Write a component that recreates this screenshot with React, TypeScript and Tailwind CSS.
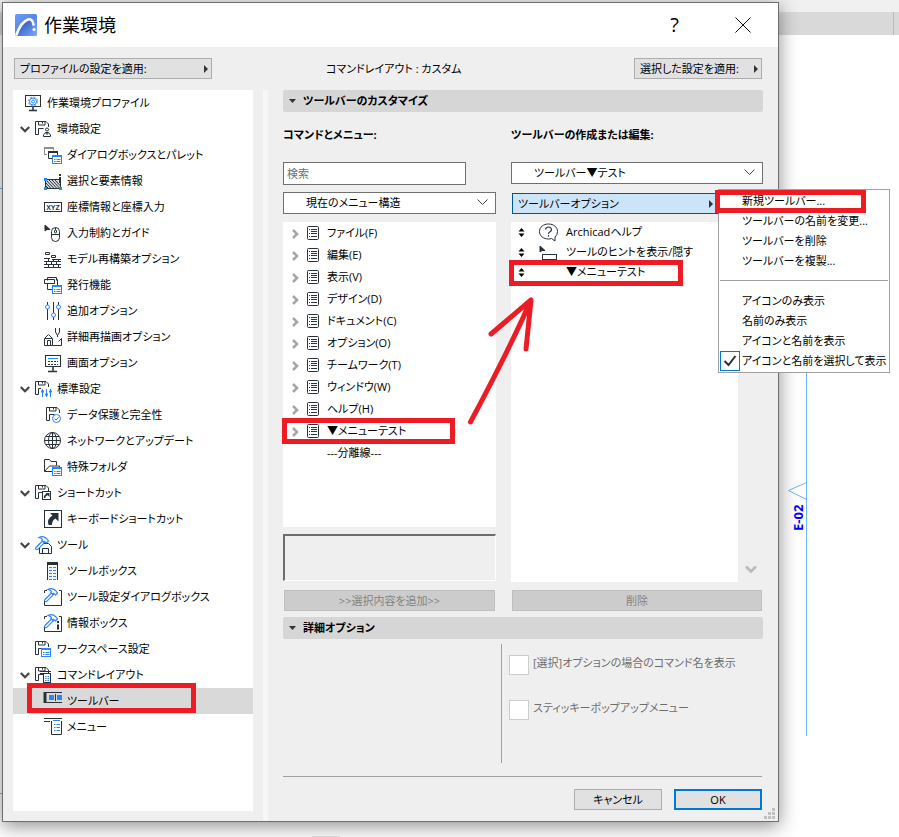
import { useState } from 'react'
import type { ReactNode } from 'react'
import { clsx } from 'clsx'

const DARK = '#263238'
const BLUE = '#2a83ff'

/* ---------- アイコン部品 ---------- */

const Floppy = () => (
  <g stroke={DARK}>
    <path d="M3.5 14.5h-3v-13h10.500l2.500 2.500v3" />
    <path d="M3.500 2v3h6.500V2M7.500 2v1.500M3.500 14.500V8.500h5" />
  </g>
)

const MiniWindow = () => (
  <g stroke={BLUE}>
    <rect x="8.500" y="9.500" width="9" height="8" fill="#fff" />
    <path d="M8 10h10" strokeWidth="2" />
    <path d="M10 13.500h1.500M12.500 13.500h4M10 15.500h1.500M12.500 15.500h4" />
  </g>
)

const Hammer = () => (
  <g stroke={BLUE} strokeWidth="1.200" fill="#fff">
    <path d="M1 11.500 7.500 5l1.800 1.800L2.800 13.300Q1 14 .5 12.500Z" />
    <path d="M4 1.500Q8-.5 11.500 2.500L13.500 5 11.500 7 9.500 5.200 8.500 6 6.800 4.400 7.500 3.500Q6.500 2 4 1.500Z" />
  </g>
)

const icons: Record<string, ReactNode> = {
  profile: (
    <>
      <rect x=".5" y="1.500" width="15" height="11" stroke={DARK} />
      <path d="M8 13v3M4 16.500h8" stroke={DARK} strokeWidth="1.500" />
      <circle cx="8" cy="7.500" r="1.500" stroke={BLUE} />
      <circle cx="8" cy="7.500" r="3.500" stroke={BLUE} />
      <circle cx="8" cy="7.500" r="4.500" stroke={BLUE} strokeDasharray="1.800 1.734" />
    </>
  ),
  env: (
    <>
      <Floppy />
      <circle cx="12" cy="9.500" r="1.500" stroke={DARK} />
      <path d="M8.500 16.500v-1.500l2-2.500h3l2 2.500v1.500zM10.500 12.500l1.500 2 1.500-2" stroke={DARK} fill="#fff" />
    </>
  ),
  dialog: (
    <>
      <path d="M3 8.500H.5v-7h9v3" stroke="#8b9297" />
      <path d="M0 2h10" stroke="#8b9297" strokeWidth="2" />
      <path d="M8 12.500H4.500v-7h9v3.500" stroke={DARK} />
      <path d="M4 6h10" stroke={DARK} strokeWidth="2" />
      <MiniWindow />
    </>
  ),
  select: (
    <>
      <rect x="1.500" y="7.500" width="15" height="9" fill="#d5d8da" stroke={DARK} />
      <path d="M2 8l8 8.500M5 8l8 8.500M8 8l8 8.500M11 8l5 5.500M2 11l5 5.500M2 14l2.500 2.500" stroke={DARK} />
      <path d="M0 6h3v3H0zM0 15h3v3H0zM15 15h3v3h-3z" fill={BLUE} />
      <path d="M16 2v2M16 5v6" stroke={DARK} strokeWidth="2" />
    </>
  ),
  xyz: (
    <>
      <rect x=".5" y="4.500" width="17" height="9" stroke={DARK} />
      <text x="9" y="11.500" textAnchor="middle" fontSize="7" fontWeight="700" fontFamily="Liberation Sans, sans-serif" fill={DARK}>XYZ</text>
    </>
  ),
  mouse: (
    <>
      <path d="M1 1v6l2-1.500h3z" fill={DARK} stroke={DARK} />
      <rect x="7.500" y="3.500" width="8" height="14" rx="4" stroke={DARK} />
      <path d="M7.500 10.500h8M11.500 4v2" stroke={DARK} />
      <rect x="10.500" y="6" width="2" height="3" rx="1" stroke={DARK} />
    </>
  ),
  bricks: (
    <g stroke={DARK}>
      <path d="M1.500 2.500h4v2h-4zM7.500 5.500h4v2h-4z" />
      <path d="M0 8.500h6M0 11.500h17M0 14.500h17M0 17.500h17M4.500 9v2.500M9.500 9v2.500M14.500 9v2.500M2.500 12v2.500M7.500 12v2.500M12.500 12v2.500M4.500 15v2.500M9.500 15v2.500M14.500 15v2.500" />
      <path d="M8 9.500h9" />
    </g>
  ),
  publish: (
    <>
      <path d="M3.500 4.500v-3h9v3M13.500 9V3.500h-1" stroke={DARK} />
      <path d="M.5 3.500h10v4h-10zM3.500 8v5.500H8" stroke={DARK} />
      <MiniWindow />
    </>
  ),
  sliders: (
    <>
      <path d="M3.500 0v18M9.500 0v18M14.500 0v18" stroke={DARK} />
      <circle cx="3.500" cy="5" r="2" fill="#fff" stroke={BLUE} />
      <circle cx="9.500" cy="13" r="2" fill="#fff" stroke={BLUE} />
      <circle cx="14.500" cy="5" r="2" fill="#fff" stroke={BLUE} />
    </>
  ),
  redraw: (
    <g stroke={DARK}>
      <path d="M.5 17.500V10.500L4.500 6.500l4 4v7zM3.500 17.500v-5h3v5M1 10.500h7" />
      <path d="M11.500 0v4l2 3.500 2-3.500V0M13.500 7v2" />
      <path d="M8.500 17.500h9v-7l-3 3" />
    </g>
  ),
  screen: (
    <>
      <rect x="1.500" y="1.500" width="15" height="11" stroke={DARK} />
      <path d="M9 13v4M4 17.500h9" stroke={DARK} strokeWidth="1.500" />
      <path d="M4 4.500h10" stroke={BLUE} />
      <path d="M4 7.500h10M4 10.500h10" stroke={DARK} strokeDasharray="2 1" />
    </>
  ),
  standard: (
    <>
      <Floppy />
      <path d="M6 8h11v10H6z" fill="#fff" />
      <path d="M7.500 9v8M11.500 9v8M15.500 9v8" stroke={BLUE} />
      <path d="M6 11.500h3M10 14.500h3M14 11.500h3" stroke={BLUE} strokeWidth="2" />
    </>
  ),
  protect: (
    <>
      <g transform="translate(2 0)"><Floppy /></g>
      <circle cx="12.500" cy="12.500" r="4" fill="#fff" stroke={BLUE} />
      <path d="M10.500 12.500l1.500 1.500 3-3" stroke={BLUE} />
    </>
  ),
  globe: (
    <g stroke={DARK}>
      <circle cx="8.500" cy="8.500" r="8" />
      <ellipse cx="8.500" cy="8.500" rx="4" ry="8" />
      <path d="M8.500 0v17M0 8.500h17M2 4.500h13M2 12.500h13" />
    </g>
  ),
  folder: (
    <>
      <path d="M.5 13.500v-12h5l1.500 2h5.500v4M.5 13.500l5-5.500h10v1.500M.5 13.500H8" stroke={DARK} />
      <MiniWindow />
    </>
  ),
  shortcut: (
    <>
      <Floppy />
      <rect x="7.500" y="7.500" width="8" height="8" fill="#fff" stroke={DARK} />
      <path d="M9.500 14q0-3 3-3.500" stroke={DARK} strokeWidth="1.500" />
      <path d="M10.500 9h4v4z" fill={DARK} />
    </>
  ),
  keyboard: (
    <>
      <rect x=".5" y=".5" width="17" height="17" stroke={DARK} />
      <path d="M6 3h8.500v8.500l-3-3Q8 10 8 15H4.500Q2.500 9 8.500 5.500Z" fill={DARK} />
    </>
  ),
  tool: (
    <>
      <path d="M4.500 17.500V7.500h9l3 3v7zM7.500 17.500v-5h6v5" stroke={DARK} />
      <Hammer />
    </>
  ),
  toolbox: (
    <>
      <path d="M3.500 1v17M13.500 1v17M3 1.500h11" stroke={DARK} />
      <path d="M3 1.500h11" stroke={DARK} strokeWidth="3" />
      <path d="M5 5.500h3M9 5.500h3M5 8.500h3M9 8.500h3M5 11.500h3M9 11.500h3M5 14.500h3M9 14.500h3M5 17.500h3M9 17.500h3" stroke={BLUE} />
      <path d="M4 7h9M4 10h9M4 13h9M4 16h9" stroke="#c3c8ca" strokeWidth=".5" />
    </>
  ),
  toolDialog: (
    <>
      <path d="M.5 5V2.500H3M.5 13v4.500h17V2.500H15" stroke={DARK} />
      <Hammer />
    </>
  ),
  info: (
    <>
      <path d="M.5 5V2.500H3M.5 13v4.500h17V2.500H15" stroke={DARK} />
      <Hammer />
      <path d="M14 7v2M14 10.500v5" stroke={DARK} strokeWidth="2" />
    </>
  ),
  workspace: (
    <>
      <Floppy />
      <g transform="translate(-2 -1)"><MiniWindow /></g>
    </>
  ),
  command: (
    <>
      <Floppy />
      <path d="M5 5.500h11M5 7.500h11" stroke={DARK} />
      <rect x="8.500" y="7.500" width="7" height="9" fill="#fff" stroke={DARK} />
      <path d="M10 10.500h1.500M12.500 10.500H14M10 12.500h1.500M12.500 12.500H14M10 14.500h1.500M12.500 14.500H14" stroke={BLUE} />
    </>
  ),
  toolbar: (
    <>
      <path d="M1 0v11" stroke={DARK} strokeWidth="3" />
      <path d="M0 .5h18M0 10.500h18M11.500 2v7" stroke={DARK} />
      <path d="M5 3h5v5H5zM13 3h5v5h-5z" fill={BLUE} />
    </>
  ),
  menu: (
    <>
      <path d="M0 .5h18M0 3.500h6M7.500 3v13.500h10V3" stroke={DARK} />
      <path d="M9 2.500h7" stroke={BLUE} />
      <path d="M10 6.500h1.500M12.500 6.500H16M10 9.500h1.500M12.500 9.500H16M10 12.500h1.500M12.500 12.500H16" stroke={BLUE} />
    </>
  ),
}

const TreeIcon = ({ name }: { name: string }) => (
  <svg className="h-[18px] w-[18px] shrink-0 overflow-visible" viewBox="0 0 18 18" fill="none" aria-hidden="true">
    {icons[name]}
  </svg>
)

/* ---------- データ ---------- */

const tree = [
  { level: 0, icon: 'profile', label: '作業環境プロファイル' },
  { level: 1, icon: 'env', label: '環境設定', open: true },
  { level: 2, icon: 'dialog', label: 'ダイアログボックスとパレット' },
  { level: 2, icon: 'select', label: '選択と要素情報' },
  { level: 2, icon: 'xyz', label: '座標情報と座標入力' },
  { level: 2, icon: 'mouse', label: '入力制約とガイド' },
  { level: 2, icon: 'bricks', label: 'モデル再構築オプション' },
  { level: 2, icon: 'publish', label: '発行機能' },
  { level: 2, icon: 'sliders', label: '追加オプション' },
  { level: 2, icon: 'redraw', label: '詳細再描画オプション' },
  { level: 2, icon: 'screen', label: '画面オプション' },
  { level: 1, icon: 'standard', label: '標準設定', open: true },
  { level: 2, icon: 'protect', label: 'データ保護と完全性' },
  { level: 2, icon: 'globe', label: 'ネットワークとアップデート' },
  { level: 2, icon: 'folder', label: '特殊フォルダ' },
  { level: 1, icon: 'shortcut', label: 'ショートカット', open: true },
  { level: 2, icon: 'keyboard', label: 'キーボードショートカット' },
  { level: 1, icon: 'tool', label: 'ツール', open: true },
  { level: 2, icon: 'toolbox', label: 'ツールボックス' },
  { level: 2, icon: 'toolDialog', label: 'ツール設定ダイアログボックス' },
  { level: 2, icon: 'info', label: '情報ボックス' },
  { level: 1, icon: 'workspace', label: 'ワークスペース設定' },
  { level: 1, icon: 'command', label: 'コマンドレイアウト', open: true },
  { level: 2, icon: 'toolbar', label: 'ツールバー' },
  { level: 2, icon: 'menu', label: 'メニュー' },
]

const commands = [
  'ファイル(F)',
  '編集(E)',
  '表示(V)',
  'デザイン(D)',
  'ドキュメント(C)',
  'オプション(O)',
  'チームワーク(T)',
  'ウィンドウ(W)',
  'ヘルプ(H)',
  '▼メニューテスト',
]

/* ---------- 共通部品 ---------- */

const Marker = ({ className }: { className: string }) => (
  <span className={clsx('pointer-events-none absolute z-10 border-5 border-[#ed1c24]', className)} />
)

const RightArrow = () => (
  <svg className="h-2 w-1 shrink-0" viewBox="0 0 4 8" aria-hidden="true">
    <path d="M0 0l4 4-4 4z" fill="#333" />
  </svg>
)

const SectionHeader = ({ children }: { children: ReactNode }) => (
  <h2 className="h-[22px] rounded-xs bg-[#d6d6d6] font-bold">
    <button className="flex h-full w-full items-center gap-[7px] pl-1.5">
      <svg className="h-1 w-[7px]" viewBox="0 0 7 4" aria-hidden="true">
        <path d="M0 0h7L3.500 4z" fill="#333" />
      </svg>
      {children}
    </button>
  </h2>
)

const Dropdown = ({ id, value, label }: { id: string; value: string; label: string }) => (
  <div className="relative">
    <select id={id} aria-label={label} className="block h-[22px] w-full appearance-none border border-[#707070] bg-white pl-[22px] outline-none">
      <option>{value}</option>
    </select>
    <svg className="pointer-events-none absolute top-[7px] right-2 h-[7px] w-[11px]" viewBox="0 0 11 7" fill="none" stroke="#444" aria-hidden="true">
      <path d="M.5.5l5 5 5-5" />
    </svg>
  </div>
)

const UpDown = () => (
  <svg className="h-[9px] w-[7px] shrink-0" viewBox="0 0 7 9" aria-hidden="true">
    <path d="M.5 3.500 3.500 0l3 3.500zM.5 5.500h6L3.500 9z" fill="#000" />
  </svg>
)

const ToolbarMenu = () => (
  <div role="menu" className="absolute -top-1 left-full z-20 w-[172px] border border-[#a0a0a0] bg-white p-px">
    {['新規ツールバー...', 'ツールバーの名前を変更...', 'ツールバーを削除', 'ツールバーを複製...'].map((item, i) => (
      <button key={item} role="menuitem" className="relative block h-5 w-full pl-[22px] text-left whitespace-nowrap">
        {item}
        {i === 0 && <Marker className="-top-px -left-[5px] h-[23px] w-[151px]" />}
      </button>
    ))}
    <hr className="mt-[9px] mb-2.5 border-[#a0a0a0]" />
    {['アイコンのみ表示', '名前のみ表示', 'アイコンと名前を表示', 'アイコンと名前を選択して表示'].map((item, i) => (
      <button key={item} role="menuitem" className="flex h-5 w-full items-center gap-0.5 text-left whitespace-nowrap">
        <span className={clsx('h-5 w-5 shrink-0 border', i === 3 ? 'border-[#0078d7]' : 'border-transparent')}>
          {i === 3 && (
            <svg viewBox="0 0 18 18" fill="none" stroke={DARK} strokeWidth="2" aria-hidden="true">
              <path d="M3.500 9l4 4 7-9" />
            </svg>
          )}
        </span>
        {item}
      </button>
    ))}
  </div>
)

/* ---------- 背景の図面 ---------- */

const Backdrop = () => (
  <div className="absolute inset-0" aria-hidden="true">
    <div className="h-3 bg-[#f0f0f0]" />
    <div className="flex h-[23px] justify-end bg-[#d9d9d9] pr-[5px]">
      <div className="w-px bg-[#b9b9b9]" />
    </div>
    <svg className="absolute top-0 left-0 h-[837px] w-[899px]" viewBox="0 0 899 837" fill="none">
      <path d="M806.500 373v363M806.500 482.500L788.500 490.500l18 9" stroke="#6cb6ff" />
      <path d="M0 188.500h3M0 793.500h3" stroke="#6cb6ff" />
      <path d="M312 836.500h28" stroke="#e4e4e4" />
      <text x="803" y="531" transform="rotate(-90 803 531)" fontSize="13" fontWeight="700" fill="#0000ff" fontFamily="Open Sans, sans-serif">
        E-02
      </text>
    </svg>
  </div>
)

/* ---------- 画面 ---------- */

const SideTree = () => {
  const [selected, setSelected] = useState('ツールバー')

  return (
    <ul className="w-60 shrink-0 bg-white">
      {tree.map((node) => (
        <li key={node.label} className="relative">
          <button
            onClick={() => setSelected(node.label)}
            className={clsx(
              'flex h-[26px] w-full items-center whitespace-nowrap',
              node.level === 0 && 'gap-1 pl-3',
              node.level === 1 && 'gap-1 pl-[22px]',
              node.level === 2 && 'gap-[5px] pl-[31px]',
              selected === node.label && 'bg-[#d9d9d9]',
            )}
          >
            {node.open && (
              <svg className="absolute left-[7px] h-[7px] w-2.5" viewBox="0 0 10 7" fill="none" stroke="#444" strokeWidth="2.200" aria-hidden="true">
                <path d="M.8 1l4.200 4.200L9.200 1" />
              </svg>
            )}
            <TreeIcon name={node.icon} />
            {node.label}
          </button>
          {node.label === 'ツールバー' && <Marker className="-top-[5px] left-3.5 h-[30px] w-[169px]" />}
        </li>
      ))}
    </ul>
  )
}

const CommandColumn = () => (
  <div>
    <label htmlFor="search" className="mt-[13px] block h-5 font-bold">コマンドとメニュー:</label>
    <input id="search" type="text" placeholder="検索" className="mt-[17px] block h-[23px] w-[183px] border border-[#707070] bg-white px-[3px] outline-none placeholder:text-[#6d6d6d]" />
    <div className="mt-[7px]">
      <Dropdown id="structure" label="メニュー構造" value="現在のメニュー構造" />
    </div>
    <ul className="mt-2 h-[305px] bg-white">
      {commands.map((item) => (
        <li key={item} className="relative">
          <button className="flex h-[22px] w-full items-center pl-[9px]">
            <svg className="mt-0.5 h-2.5 w-[7px] shrink-0" viewBox="0 0 7 10" fill="none" stroke="#a6a6a6" strokeWidth="2.600" aria-hidden="true">
              <path d="M1 1l4 4-4 4" />
            </svg>
            <svg className="ml-2 h-3.5 w-3 shrink-0" viewBox="0 0 12 14" fill="none" stroke={DARK} aria-hidden="true">
              <rect x=".5" y=".5" width="11" height="13" rx="1" />
              <path d="M2 3.500h1M4 3.500h6M4 5.500h6M2 7.500h1M4 7.500h6M2 10.500h1M4 10.500h6" />
            </svg>
            <span className="ml-2">{item}</span>
          </button>
          {item.startsWith('▼') && <Marker className="-top-0.5 -left-px h-[26px] w-[173px]" />}
        </li>
      ))}
      <li>
        <button className="block h-[22px] pl-11">---分離線---</button>
      </li>
    </ul>
    <div className="mt-[7px] h-[47px] border border-t-2 border-l-2 border-white border-t-[#6d6d6d] border-l-[#6d6d6d]" />
    <button disabled className="mx-px mt-[9px] block h-[21px] w-[calc(100%-2px)] border border-[#bfbfbf] bg-[#ccc] leading-none text-[#838383]">
      &gt;&gt;選択内容を追加&gt;&gt;
    </button>
  </div>
)

const ToolbarColumn = () => (
  <div>
    <label htmlFor="toolbar" className="mt-[13px] block h-5 font-bold">ツールバーの作成または編集:</label>
    <div className="mt-[17px]">
      <Dropdown id="toolbar" label="ツールバーの作成または編集" value="ツールバー▼テスト" />
    </div>
    <div className="relative mt-[9px] ml-px w-[206px]">
      <button aria-haspopup="menu" className="flex h-[21px] w-full items-center justify-between border border-[#005499] bg-[#cce4f7] pr-1 pl-[5px]">
        ツールバーオプション
        <RightArrow />
      </button>
      <ToolbarMenu />
    </div>
    <div className="mt-2 flex">
      <ul className="h-[360px] grow bg-white">
        <li className="flex h-5 items-center pl-[7px]">
          <UpDown />
          <svg className="mr-2 ml-3.5 h-[19px] w-[19px]" viewBox="0 0 19 19" fill="none" stroke={DARK} aria-hidden="true">
            <path d="M16 18v-4Q18.500 12 18.500 8.500C18.500 4 14.500 1 9.500 1S.5 4 .5 8.500 4.500 16 9.500 16q1.500 0 3-.5z" />
            <path d="M6.500 6.500Q7 4 9.500 4t3 2.500q0 1.500-1.500 2.200T9.500 11M9.500 12v1.500" strokeWidth="1.200" />
          </svg>
          Archicadヘルプ
        </li>
        <li className="flex h-5 items-center pl-[7px]">
          <UpDown />
          <svg className="mr-2 ml-3.5 h-[19px] w-[19px]" viewBox="0 0 19 19" fill="none" stroke={DARK} aria-hidden="true">
            <path d="M1 3v6l2-1.500h3z" fill={DARK} />
            <rect x="3.500" y="11.500" width="14" height="5" />
          </svg>
          ツールのヒントを表示/隠す
        </li>
        <li className="relative flex h-5 items-center pl-[7px]">
          <UpDown />
          <span className="ml-[41px]">▼メニューテスト</span>
          <Marker className="-top-0.5 -left-0.5 h-[26px] w-[174px]" />
        </li>
      </ul>
      <div className="flex w-[25px] items-end justify-center pb-2">
        <svg className="h-[9px] w-3" viewBox="0 0 12 9" fill="none" stroke="#bcbcbc" strokeWidth="3" aria-hidden="true">
          <path d="M1 1.500l5 5 5-5" />
        </svg>
      </div>
    </div>
    <button disabled className="mx-px mt-2 block h-[21px] w-[calc(100%-2px)] border border-[#bfbfbf] bg-[#ccc] leading-none text-[#838383]">
      削除
    </button>
  </div>
)

const DetailOption = ({ id, children }: { id: string; children: ReactNode }) => (
  <div className="flex items-start gap-1">
    <input id={id} type="checkbox" disabled className="h-5 w-5 shrink-0 appearance-none border border-[#ccc] bg-white" />
    <label htmlFor={id} className="leading-4 text-[#6d6d6d]">{children}</label>
  </div>
)

export default function App() {
  return (
    <div className="relative min-h-screen overflow-hidden bg-white pt-0.5 pr-[120px] pb-[15px] pl-0.5 font-['Open_Sans','Noto_Sans_CJK_JP',sans-serif] text-[11px] leading-5 text-black [font-feature-settings:'palt']">
      <Backdrop />

      <div role="dialog" aria-labelledby="title" className="relative border border-[#6d6d6d] bg-[#efefef] shadow-[0_4px_18px_rgba(0,0,0,0.45)]">
        {/* タイトルバー */}
        <header className="flex h-11 items-center bg-white pr-[27px] pl-3">
          <svg className="h-[22px] w-[22px]" viewBox="0 0 22 22" fill="none" aria-hidden="true">
            <defs>
              <linearGradient id="logo" x1="0" y1="0" x2="1" y2="1">
                <stop offset="0" stopColor="#6f9cf5" />
                <stop offset=".5" stopColor="#5585ea" />
                <stop offset="1" stopColor="#7ba4fa" />
              </linearGradient>
              <linearGradient id="logo-shade" x1="0" y1="0" x2="1" y2="1">
                <stop offset="0" stopColor="#1f4cae" />
                <stop offset="1" stopColor="#7ba4fa" />
              </linearGradient>
            </defs>
            <rect width="22" height="22" rx="1.500" fill="url(#logo)" />
            <path d="M2.500 22Q7 9 13.500 6.500q3.500-1 4 5.500l2.500 10z" fill="url(#logo-shade)" />
            <path d="M1.500 20.500Q6 8 13 5.500q4.500-1.200 5.500 5" stroke="#fff" strokeWidth="2.600" strokeLinecap="round" />
            <circle cx="19" cy="15.500" r="1.600" fill="#fff" />
          </svg>
          <h1 id="title" className="ml-[7px] grow text-lg">作業環境</h1>
          <button aria-label="ヘルプ" className="mr-14 text-xl">?</button>
          <button aria-label="閉じる">
            <svg className="h-4 w-4" viewBox="0 0 16 16" stroke="#111" aria-hidden="true">
              <path d="M.5.5l15 15M15.500.5l-15 15" />
            </svg>
          </button>
        </header>

        {/* プロファイル適用 */}
        <div className="mt-[11px] flex items-center pr-4 pl-[11px]">
          <button className="flex h-[21px] w-[198px] items-center justify-between border border-[#adadad] bg-[#e1e1e1] pr-[3px] pl-[5px]">
            プロファイルの設定を適用:
            <RightArrow />
          </button>
          <p className="ml-[114px] grow">コマンドレイアウト : カスタム</p>
          <button className="flex h-[21px] w-32 items-center justify-between border border-[#adadad] bg-[#e1e1e1] pr-[3px] pl-[5px]">
            選択した設定を適用:
            <RightArrow />
          </button>
        </div>

        <div className="mt-[11px] flex pl-2.5">
          <div className="flex shrink-0 pb-2.5">
            <SideTree />
          </div>
          <div className="ml-2.5 w-[5px] shrink-0 bg-[#f7f7f7]" />

          <main className="relative ml-[15px] grow pr-[15px]">
            <SectionHeader>ツールバーのカスタマイズ</SectionHeader>
            <div className="grid grid-cols-[213fr_252fr] gap-[15px]">
              <CommandColumn />
              <ToolbarColumn />
            </div>

            <div className="mt-1.5">
              <SectionHeader>詳細オプション</SectionHeader>
            </div>
            <div className="mt-[5px] flex">
              <div className="w-[219px] border-r border-[#a0a0a0]" />
              <div className="flex h-[119px] flex-col gap-[25px] pt-[11px] pl-[7px]">
                <DetailOption id="show-name">[選択]オプションの場合のコマンド名を表示</DetailOption>
                <DetailOption id="sticky">スティッキーポップアップメニュー</DetailOption>
              </div>
            </div>
            <hr className="mt-[13px] mr-px border-[#a0a0a0]" />

            <div className="mt-3 mr-px mb-[11px] flex justify-end gap-3">
              <button className="h-[21px] w-[88px] border border-[#adadad] bg-[#e1e1e1] leading-none">キャンセル</button>
              <button className="h-[21px] w-[88px] border-2 border-[#0078d7] bg-[#e1e1e1] leading-none">OK</button>
            </div>

            {/* 手書きの矢印 */}
            <svg className="pointer-events-none absolute top-[200px] left-[182px] h-[140px] w-[76px]" viewBox="465 290 76 140" fill="none" stroke="#ed1c24" strokeWidth="5" strokeLinecap="round" strokeLinejoin="round" aria-hidden="true">
              <path d="M470.500 422Q510 348 531 300M491 334l40-34-5 49" />
            </svg>
          </main>
        </div>

        <svg className="absolute right-[3px] bottom-0.5 h-[11px] w-[11px]" viewBox="0 0 11 11" fill="#bfbfbf" aria-hidden="true">
          <path d="M8 0h3v3H8zM8 4h3v3H8zM4 4h3v3H4zM8 8h3v3H8zM4 8h3v3H4zM0 8h3v3H0z" />
        </svg>
      </div>
    </div>
  )
}
